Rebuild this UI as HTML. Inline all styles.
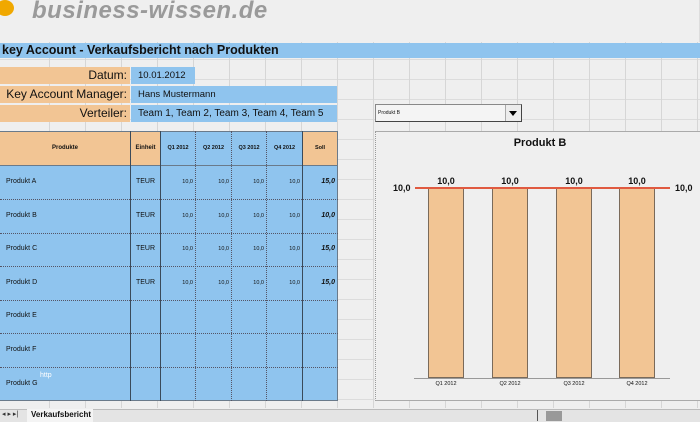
<!DOCTYPE html>
<html><head><meta charset="utf-8"><style>
*{margin:0;padding:0;box-sizing:border-box}
body{width:700px;height:422px;overflow:hidden;background:#efefef;font-family:"Liberation Sans",sans-serif;position:relative;color:#111}
.a{position:absolute}
.grid{left:0;top:0;width:700px;height:408px;
background-image:repeating-linear-gradient(to right,transparent 0 35px,#d6d6d6 35px 36px),repeating-linear-gradient(to bottom,transparent 0 19px,#dcdcdc 19px 20px);
background-position:14px 0,0 0;}
.or{background:#f2c594}
.bl{background:#8fc4ee}
.lbl{font-size:12px;text-align:right;padding-right:3px;line-height:17px}
.val{font-size:9.5px;line-height:17px;padding-left:7px}
.cell{position:absolute;font-size:7px}
</style></head><body>
<div class="a grid"></div>
<div class="a" style="left:0;top:0;width:700px;height:42px;background:#efefef;border-right:1px solid #ddd"></div>
<div class="a" style="left:-4px;top:0;width:18px;height:16px;border-radius:50%;background:#f0a800"></div>
<div class="a" style="left:32px;top:-3px;font-size:24px;font-style:italic;font-weight:bold;color:#9a9a9a;letter-spacing:0.5px">business-wissen.de</div>
<div class="a bl" style="left:0;top:43px;width:700px;height:15px"></div>
<div class="a" style="left:2px;top:43px;font-size:12.5px;font-weight:bold;line-height:15px">key Account - Verkaufsbericht nach Produkten</div>
<div class="a or lbl" style="left:0;top:67px;width:130px;height:17px">Datum:</div>
<div class="a bl val" style="left:131px;top:67px;width:64px;height:17px">10.01.2012</div>
<div class="a or lbl" style="left:0;top:86px;width:130px;height:17px">Key Account Manager:</div>
<div class="a bl val" style="left:131px;top:86px;width:206px;height:17px">Hans Mustermann</div>
<div class="a or lbl" style="left:0;top:105px;width:130px;height:17px">Verteiler:</div>
<div class="a bl val" style="left:131px;top:105px;width:206px;height:17px;font-size:10px">Team 1, Team 2, Team 3, Team 4, Team 5</div>

<div class="a bl" style="left:0;top:131px;width:338px;height:270px;border:1px solid #6a7a8a;border-left:none"></div>
<div class="a or" style="left:0;top:132px;width:130px;height:33px"></div>
<div class="a or" style="left:131px;top:132px;width:29px;height:33px"></div>
<div class="a or" style="left:303px;top:132px;width:34px;height:33px"></div>
<div class="a" style="left:0;top:165px;width:338px;height:1px;background:#6a7a8a"></div>
<div class="a" style="left:130px;top:131px;width:1px;height:270px;background:#3a4a5a"></div>
<div class="a" style="left:160px;top:131px;width:1px;height:270px;background:#3a4a5a"></div>
<div class="a" style="left:302px;top:131px;width:1px;height:270px;background:#3a4a5a"></div>
<div class="a" style="left:195px;top:131px;height:270px;border-left:1px dotted #556"></div>
<div class="a" style="left:231px;top:131px;height:270px;border-left:1px dotted #556"></div>
<div class="a" style="left:266px;top:131px;height:270px;border-left:1px dotted #556"></div>
<div class="a" style="left:0;top:199px;width:338px;border-top:1px dotted #556"></div>
<div class="a" style="left:0;top:233px;width:338px;border-top:1px dotted #556"></div>
<div class="a" style="left:0;top:266px;width:338px;border-top:1px dotted #556"></div>
<div class="a" style="left:0;top:300px;width:338px;border-top:1px dotted #556"></div>
<div class="a" style="left:0;top:333px;width:338px;border-top:1px dotted #556"></div>
<div class="a" style="left:0;top:367px;width:338px;border-top:1px dotted #556"></div>

<div class="cell" style="left:0;width:130px;top:145px;text-align:center;font-weight:bold;font-size:6px">Produkte</div>
<div class="cell" style="left:131px;width:29px;top:145px;text-align:center;font-weight:bold;font-size:6px">Einheit</div>
<div class="cell" style="left:161px;width:34px;top:145px;text-align:center;font-weight:bold;font-size:5.5px">Q1 2012</div>
<div class="cell" style="left:196px;width:35px;top:145px;text-align:center;font-weight:bold;font-size:5.5px">Q2 2012</div>
<div class="cell" style="left:232px;width:34px;top:145px;text-align:center;font-weight:bold;font-size:5.5px">Q3 2012</div>
<div class="cell" style="left:267px;width:35px;top:145px;text-align:center;font-weight:bold;font-size:5.5px">Q4 2012</div>
<div class="cell" style="left:303px;width:34px;top:145px;text-align:center;font-weight:bold;font-size:5.5px">Soll</div>

<div class="cell" style="left:6px;top:178px">Produkt A</div>
<div class="cell" style="left:6px;top:212px">Produkt B</div>
<div class="cell" style="left:6px;top:245px">Produkt C</div>
<div class="cell" style="left:6px;top:279px">Produkt D</div>
<div class="cell" style="left:6px;top:312px">Produkt E</div>
<div class="cell" style="left:6px;top:346px">Produkt F</div>
<div class="cell" style="left:6px;top:380px">Produkt G</div>
<div class="cell" style="left:40px;top:372px;color:#fff;font-size:7px">http</div>

<div class="cell" style="left:131px;width:29px;text-align:center;top:178px">TEUR</div>
<div class="cell" style="left:131px;width:29px;text-align:center;top:212px">TEUR</div>
<div class="cell" style="left:131px;width:29px;text-align:center;top:245px">TEUR</div>
<div class="cell" style="left:131px;width:29px;text-align:center;top:279px">TEUR</div>
<div class="cell" style="left:161px;width:32px;text-align:right;top:179px;font-size:5.5px">10,0</div><div class="cell" style="left:196px;width:33px;text-align:right;top:179px;font-size:5.5px">10,0</div><div class="cell" style="left:232px;width:32px;text-align:right;top:179px;font-size:5.5px">10,0</div><div class="cell" style="left:267px;width:33px;text-align:right;top:179px;font-size:5.5px">10,0</div>
<div class="cell" style="left:161px;width:32px;text-align:right;top:213px;font-size:5.5px">10,0</div><div class="cell" style="left:196px;width:33px;text-align:right;top:213px;font-size:5.5px">10,0</div><div class="cell" style="left:232px;width:32px;text-align:right;top:213px;font-size:5.5px">10,0</div><div class="cell" style="left:267px;width:33px;text-align:right;top:213px;font-size:5.5px">10,0</div>
<div class="cell" style="left:161px;width:32px;text-align:right;top:246px;font-size:5.5px">10,0</div><div class="cell" style="left:196px;width:33px;text-align:right;top:246px;font-size:5.5px">10,0</div><div class="cell" style="left:232px;width:32px;text-align:right;top:246px;font-size:5.5px">10,0</div><div class="cell" style="left:267px;width:33px;text-align:right;top:246px;font-size:5.5px">10,0</div>
<div class="cell" style="left:161px;width:32px;text-align:right;top:280px;font-size:5.5px">10,0</div><div class="cell" style="left:196px;width:33px;text-align:right;top:280px;font-size:5.5px">10,0</div><div class="cell" style="left:232px;width:32px;text-align:right;top:280px;font-size:5.5px">10,0</div><div class="cell" style="left:267px;width:33px;text-align:right;top:280px;font-size:5.5px">10,0</div>
<div class="cell" style="left:303px;width:32px;text-align:right;top:178px;font-weight:bold;font-style:italic">15,0</div>
<div class="cell" style="left:303px;width:32px;text-align:right;top:212px;font-weight:bold;font-style:italic">10,0</div>
<div class="cell" style="left:303px;width:32px;text-align:right;top:245px;font-weight:bold;font-style:italic">15,0</div>
<div class="cell" style="left:303px;width:32px;text-align:right;top:279px;font-weight:bold;font-style:italic">15,0</div>

<div class="a" style="left:375px;top:104px;width:147px;height:18px;background:#f4f4f4;border:1px solid #888;border-right-color:#444;border-bottom-color:#444"></div>
<div class="a" style="left:378px;top:110px;font-size:5px">Produkt B</div>
<div class="a" style="left:505px;top:105px;width:16px;height:16px;background:#ececec;border-left:1px solid #aaa"></div>
<div class="a" style="left:509px;top:111px;width:0;height:0;border-left:4px solid transparent;border-right:4px solid transparent;border-top:5px solid #000"></div>

<div class="a" style="left:375px;top:131px;width:325px;height:270px;background:#efefef;border-left:1px dotted #999;border-top:1px solid #aaa;border-bottom:1px solid #aaa"></div>
<div class="a" style="left:375px;top:137px;width:330px;text-align:center;font-size:11px;font-weight:bold">Produkt B</div>
<div class="a or" style="left:428px;top:188px;width:36px;height:190px;border:1px solid #7a6a5a;border-top:none"></div>
<div class="a or" style="left:492px;top:188px;width:36px;height:190px;border:1px solid #7a6a5a;border-top:none"></div>
<div class="a or" style="left:556px;top:188px;width:36px;height:190px;border:1px solid #7a6a5a;border-top:none"></div>
<div class="a or" style="left:619px;top:188px;width:36px;height:190px;border:1px solid #7a6a5a;border-top:none"></div>
<div class="a" style="left:414px;top:378px;width:256px;height:1px;background:#999"></div>
<div class="a" style="left:415px;top:187px;width:255px;height:2px;background:#e05a40"></div>
<div class="a" style="left:428px;width:36px;top:176px;text-align:center;font-size:9px;font-weight:bold">10,0</div>
<div class="a" style="left:492px;width:36px;top:176px;text-align:center;font-size:9px;font-weight:bold">10,0</div>
<div class="a" style="left:556px;width:36px;top:176px;text-align:center;font-size:9px;font-weight:bold">10,0</div>
<div class="a" style="left:619px;width:36px;top:176px;text-align:center;font-size:9px;font-weight:bold">10,0</div>
<div class="a" style="left:393px;top:183px;font-size:9px;font-weight:bold">10,0</div>
<div class="a" style="left:675px;top:183px;font-size:9px;font-weight:bold">10,0</div>
<div class="a" style="left:428px;width:36px;top:381px;text-align:center;font-size:5.5px">Q1 2012</div>
<div class="a" style="left:492px;width:36px;top:381px;text-align:center;font-size:5.5px">Q2 2012</div>
<div class="a" style="left:556px;width:36px;top:381px;text-align:center;font-size:5.5px">Q3 2012</div>
<div class="a" style="left:619px;width:36px;top:381px;text-align:center;font-size:5.5px">Q4 2012</div>

<div class="a" style="left:0;top:409px;width:700px;height:13px;background:#e4e4e4;border-top:1px solid #bbb"></div>
<div class="a" style="left:2px;top:410px;font-size:7px;color:#333">◂ ▸ ▸|</div>
<div class="a" style="left:27px;top:409px;width:66px;height:13px;background:#f4f4f4"></div>
<div class="a" style="left:31px;top:410px;font-size:8px;font-weight:bold">Verkaufsbericht</div>
<div class="a" style="left:537px;top:410px;width:1px;height:11px;background:#555"></div>
<div class="a" style="left:546px;top:411px;width:16px;height:10px;background:#999"></div>
</body></html>
